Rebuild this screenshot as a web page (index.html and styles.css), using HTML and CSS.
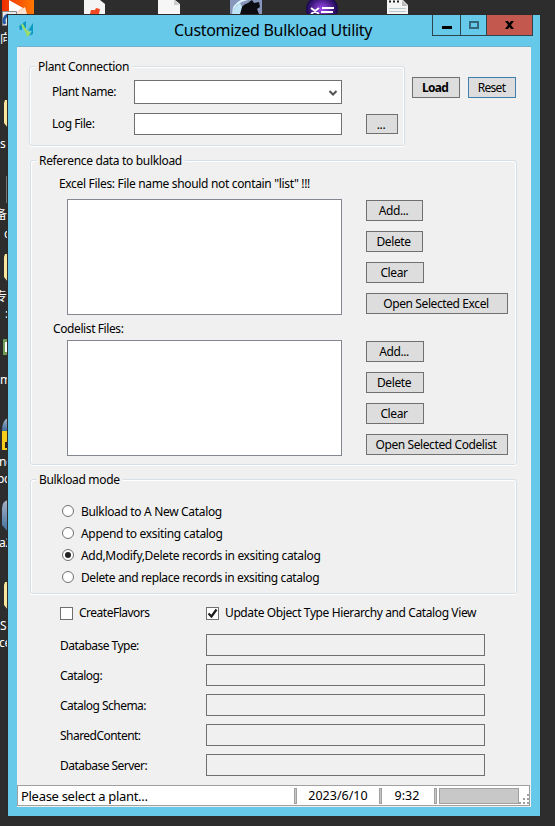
FILE: index.html
```html
<!DOCTYPE html>
<html lang="en">

<head>
    <meta charset="UTF-8">
    <meta name="viewport" content="width=device-width, initial-scale=1.0">
    <title>Customized Bulkload Utility</title>
    <link rel="stylesheet" href="styles.css">
</head>

<body>
    <!-- desktop icons behind the window -->
    <svg class="desktop" width="555" height="826" viewBox="0 0 555 826">
        <defs>
            <linearGradient id="orange" x1="0" y1="0" x2="1" y2="0">
                <stop offset="0" stop-color="#f02c00" />
                <stop offset="1" stop-color="#ff7900" />
            </linearGradient>
            <linearGradient id="steel" x1="0" y1="0" x2="0" y2="1">
                <stop offset="0" stop-color="#a9b2c2" />
                <stop offset="1" stop-color="#3c6e9f" />
            </linearGradient>
            <radialGradient id="purple">
                <stop offset="0" stop-color="#a14bf5" />
                <stop offset="1" stop-color="#18064f" />
            </radialGradient>
        </defs>
        <path d="M2 0h32v15H2z" fill="url(#orange)" />
        <path d="M9 0l14 8-10 7H9z" fill="#fff" />
        <path d="M14 14l11-7 2 7z" fill="#fde2cf" />
        <path d="M2.500 11.500h14v14h-14z" fill="#e8e8e8" stroke="#888" />
        <path d="M8 15a6 6 0 0 0-3 9" fill="none" stroke="#245aa5" stroke-width="3" />
        <path d="M84 0h16l5 4v10H84z" fill="#f4f4f4" />
        <path d="M90 14l1-4 4 0 1-2 4 1-1 5z" fill="#f04a22" />
        <path d="M158 0h17l5 4v10h-22z" fill="#f6f6f6" />
        <path d="M174 0v5h6z" fill="#ccc" />
        <path d="M230 0h32v14h-32z" fill="#8796ba" />
        <path d="M232 14q3-12 16-14h-7q-9 4-9 14z" fill="#dff4ff" />
        <path d="M240 14q0-9 8-11l4-3 2 3 5-1 1 5-3 2 2 5z" fill="#0b0d12" />
        <path d="M232 14q2-8 8-11l2 4-2 7z" fill="#bfe4f5" />
        <ellipse cx="322" cy="9" rx="16" ry="14" fill="url(#purple)" />
        <path d="M311 8l8 6M319 8l-8 6M322 8h12M321 12h12" stroke="#fff" stroke-width="2" />
        <path d="M387 0h16l5 5v9h-21z" fill="#f4f4f4" />
        <path d="M389 1.500h2m2 0h2m2 0h2" stroke="#222" stroke-width="2" />
        <path d="M389 8.500h17M389 11.500h17" stroke="#b9cad0" />
        <path d="M402 0v6h6z" fill="#bbb" />

        <path d="M8 100H5l-1 3v20l4 5zM8 254H5l-1 3v20l4 5zM8 582H5l-1 3v20l4 5z" fill="#fbe49b" />
        <path d="M6.500 176v27" stroke="#777" />
        <path d="M3 339h5v16H3z" fill="#6f9b57" />
        <path d="M5 342h3v10H5z" fill="#fff" />
        <path d="M8 418q-6 2-6 13h6z" fill="url(#steel)" />
        <path d="M2 431h6v19H2z" fill="#f5cb1c" />
        <path d="M5 442h3v6H5z" fill="#222" />
        <path d="M8 500q-6 1-6 9v16l6 7z" fill="url(#steel)" />
        <g class="icon-text">
            <text x="0" y="43">向</text>
            <text x="0" y="148">s</text>
            <text x="-5" y="219">备</text>
            <text x="4" y="238">c</text>
            <text x="-5" y="301">专</text>
            <text x="5" y="318">:</text>
            <text x="0" y="384">m</text>
            <text x="-1" y="466">ne</text>
            <text x="-3" y="483">pc</text>
            <text x="-1" y="547">a2</text>
            <text x="0" y="630">S</text>
            <text x="-1" y="647">ce</text>
        </g>
    </svg>

    <div class="window">
        <div class="titlebar">
            <svg class="logo" width="16" height="18" viewBox="0 0 16 18">
                <path d="M0 5l3-2v6H1zM4 2l3-2v7H4z" fill="#0d9ac0" />
                <path d="M2 4l2-1 4 7-1 2zM8 9l4 3-4 4-1-3z" fill="#9bdc62" />
                <path d="M9 9l5-7v11l-4 2 3-5z" fill="#0d9ac0" />
                <path d="M9 9l4-6-3 5z" fill="#cdeec2" />
            </svg>
            <h1>Customized Bulkload Utility</h1>
            <div class="controls">
                <span class="ctl min"><svg width="10" height="3"><path d="M0 0h10v3H0z" /></svg></span>
                <span class="ctl max"><svg width="10" height="8"><path d="M1 1h8v6H1z" fill="none" stroke="#346779" stroke-width="2" /></svg></span>
                <span class="ctl close"><svg width="9" height="8"><path d="M0 0h3l1.500 2L6 0h3L6 4l3 4H6L4.500 6 3 8H0l3-4z" /></svg></span>
            </div>
        </div>

        <div class="client">
            <div class="form">
                <div class="top">
                    <div class="group plant">
                        <span class="legend">Plant Connection</span>
                        <div class="line">
                            <label>Plant Name:</label>
                            <div class="input combo">
                                <svg width="8" height="7"><path d="M.5 1L4 4.500 7.500 1" fill="none" stroke="#555" stroke-width="2" /></svg>
                            </div>
                        </div>
                        <div class="line">
                            <label>Log File:</label>
                            <div class="input"></div>
                            <button class="browse">...</button>
                        </div>
                    </div>
                    <button class="load">Load</button>
                    <button class="reset">Reset</button>
                </div>

                <div class="group reference">
                    <span class="legend">Reference data to bulkload</span>
                    <p class="caption excel-caption">Excel Files: File name should not contain "list" !!!</p>
                    <div class="files">
                        <div class="listbox"></div>
                        <div class="actions">
                            <button class="narrow">Add...</button>
                            <button class="narrow">Delete</button>
                            <button>Clear</button>
                            <button class="wide">Open Selected Excel</button>
                        </div>
                    </div>
                    <p class="caption code-caption">Codelist Files:</p>
                    <div class="files">
                        <div class="listbox"></div>
                        <div class="actions">
                            <button>Add...</button>
                            <button>Delete</button>
                            <button>Clear</button>
                            <button class="wide">Open Selected Codelist</button>
                        </div>
                    </div>
                </div>

                <div class="group mode">
                    <span class="legend">Bulkload mode</span>
                    <div class="option"><i class="radio"></i><span>Bulkload to A New Catalog</span></div>
                    <div class="option"><i class="radio"></i><span>Append to exsiting catalog</span></div>
                    <div class="option"><i class="radio on"></i><span>Add,Modify,Delete records in exsiting catalog</span></div>
                    <div class="option"><i class="radio"></i><span class="tight">Delete and replace records in exsiting catalog</span></div>
                </div>

                <div class="checks">
                    <div class="check"><i class="box"></i><span>CreateFlavors</span></div>
                    <div class="check"><i class="box"><svg width="11" height="11"><path d="M1.500 5.500l3 3 5-7" fill="none" stroke="#1a1a1a" stroke-width="2.200" /></svg></i><span class="tight">Update Object Type Hierarchy and Catalog View</span></div>
                </div>

                <div class="fields">
                    <label>Database Type:</label><div class="readonly"></div>
                    <label>Catalog:</label><div class="readonly"></div>
                    <label>Catalog Schema:</label><div class="readonly"></div>
                    <label>SharedContent:</label><div class="readonly"></div>
                    <label>Database Server:</label><div class="readonly"></div>
                </div>
            </div>

            <div class="status">
                <span class="message">Please select a plant...</span>
                <i class="sep"></i>
                <span class="date">2023/6/10</span>
                <i class="sep"></i>
                <span class="time">9:32</span>
                <i class="sep"></i>
                <div class="progress"></div>
                <svg class="grip" width="10" height="10"><path d="M8 0h2v2H8zM4 4h2v2H4zM8 4h2v2H8zM0 8h2v2H0zM4 8h2v2H4zM8 8h2v2H8z" fill="#a0a0a0" /></svg>
            </div>
        </div>
    </div>
</body>

</html>
```
FILE: styles.css
```css
* {
    margin: 0;
    padding: 0;
    box-sizing: border-box;
}

body {
    width: 555px;
    height: 826px;
    padding: 15px 0 0 8px;
    overflow: hidden;
    background: #2d2d2d;
    color: #000;
    font: 12px/16px "Noto Sans", "Open Sans", "Noto Sans CJK SC", sans-serif;
    letter-spacing: -.33px;
}

.desktop {
    position: absolute;
    left: 0;
    top: 0;
}

.icon-text {
    fill: #fff;
    font-size: 12px;
}

.window {
    position: relative;
    width: 532px;
    height: 801px;
    padding: 0 9px 9px;
    background: #66c9ea;
    box-shadow: 0 0 0 1px #2b2b2b;
}

.titlebar {
    display: flex;
    height: 32px;
    border-bottom: 1px solid #6fb0cb;
}

.logo {
    margin: 6px 0 0 2px;
}

h1 {
    flex: 1;
    margin-left: 139px;
    font-size: 16px;
    font-weight: normal;
    letter-spacing: -.3px;
    line-height: 31px;
    white-space: nowrap;
}

.controls {
    display: flex;
    height: 21px;
    margin-right: -2px;
    border: 1px solid #2c4450;
    border-top: 0;
}

.ctl {
    display: flex;
    align-items: center;
    justify-content: center;
    border-left: 1px solid #2c4450;
}

.ctl:first-child {
    border-left: 0;
}

.min {
    width: 27px;
    padding-top: 4px;
}

.max {
    width: 26px;
}

.close {
    width: 46px;
    background: #c2584e;
}

.client {
    display: flex;
    flex-direction: column;
    height: 760px;
    background: #f0f0f0;
}

.form {
    height: 738px;
    padding: 19px 14px 0 13px;
}

.top {
    display: flex;
    margin-left: -1px;
}

.group {
    position: relative;
    border: 1px solid #d5dfe5;
    border-radius: 3px;
    box-shadow: inset 1px 1px #fff, inset -1px 0 #fff, 0 1px #fff;
}

.legend {
    position: absolute;
    left: 5px;
    top: -8px;
    padding: 0 3px;
    background: #f0f0f0;
    white-space: nowrap;
}

label,
.caption,
.option,
.check {
    white-space: nowrap;
}

button {
    width: 58px;
    height: 21px;
    border: 1px solid #707070;
    background: #ddd;
    color: #000;
    font: inherit;
    letter-spacing: -.4px;
    line-height: 19px;
    white-space: nowrap;
}

.plant {
    width: 376px;
    height: 80px;
    padding: 13px 0 0 22px;
}

.line {
    display: flex;
    align-items: center;
    height: 24px;
}

.line + .line {
    margin-top: 8px;
}

.line label {
    width: 82px;
    letter-spacing: -.45px;
}

.input {
    width: 208px;
    height: 22px;
    border: 1px solid #707070;
    background: #fff;
}

.combo {
    display: flex;
    align-items: center;
    justify-content: flex-end;
    height: 24px;
    padding: 2px 4px 0 0;
}

.browse {
    width: 32px;
    height: 20px;
    margin-left: 24px;
    padding-right: 2px;
    line-height: 20px;
}

.load,
.reset {
    width: 48px;
    margin: 11px 0 0 7px;
}

.load {
    padding-right: 2px;
    font-weight: bold;
    letter-spacing: -.7px;
}

.reset {
    margin-left: 8px;
    padding-right: 1px;
    border-color: #3c7fb1;
    letter-spacing: -.7px;
}

.reference {
    height: 305px;
    margin-top: 14px;
    padding-top: 15px;
}

.excel-caption {
    margin: 0 0 7px 28px;
}

.code-caption {
    margin: 6px 0 3px 22px;
    letter-spacing: -.4px;
}

.files {
    display: flex;
    gap: 24px;
    padding-left: 36px;
}

.listbox {
    width: 275px;
    height: 116px;
    border: 1px solid #828790;
    background: #fff;
}

.actions {
    display: flex;
    flex-direction: column;
    gap: 10px;
    padding-top: 1px;
}

.actions button {
    padding-right: 2px;
}

.actions .narrow {
    width: 57px;
}

.actions .wide {
    width: 142px;
}

.mode {
    height: 115px;
    margin-top: 14px;
    padding: 20px 0 0 31px;
}

.option {
    display: flex;
    align-items: center;
    gap: 7px;
    height: 22px;
}

.option span {
    padding-top: 2px;
}

.tight {
    letter-spacing: -.39px;
}

.radio {
    display: flex;
    width: 12px;
    height: 12px;
    border: 1px solid #707070;
    border-radius: 50%;
    background: #fff;
}

.radio.on::after {
    content: "";
    width: 6px;
    height: 6px;
    margin: 2px;
    border-radius: 50%;
    background: #222;
}

.checks {
    display: flex;
    margin: 11px 0 0 30px;
}

.check {
    display: flex;
    align-items: center;
    gap: 6px;
    width: 146px;
    letter-spacing: -.5px;
}

.box {
    flex: none;
    width: 13px;
    height: 13px;
    border: 1px solid #707070;
    background: #fff;
}

.box svg {
    display: block;
}

.fields {
    display: grid;
    grid-template-columns: 146px 279px;
    row-gap: 8px;
    align-items: center;
    margin: 13px 0 0 30px;
}

.fields label {
    padding-top: 1px;
    letter-spacing: -.53px;
}

.readonly {
    height: 22px;
    border: 1px solid #707070;
}

.status {
    display: flex;
    align-items: center;
    width: 513px;
    height: 21px;
    border: 1px solid #a0a0a0;
    background: #fff;
}

.message {
    width: 276px;
    padding: 1px 0 0 3px;
    font-size: 13px;
    letter-spacing: -.3px;
}

.sep {
    width: 3px;
    height: 16px;
    border: 1px solid #a0a0a0;
    background: #c8c8c8;
}

.date,
.time {
    padding-top: 1px;
    font-size: 12.500px;
    letter-spacing: 0;
    text-align: center;
}

.date {
    width: 82px;
}

.time {
    width: 52px;
    padding-right: 2px;
}

.progress {
    width: 80px;
    height: 16px;
    margin-left: 2px;
    border: 1px solid #a0a0a0;
    background: #c8c8c8;
}

.grip {
    margin: 6px 0 0;
}
```
